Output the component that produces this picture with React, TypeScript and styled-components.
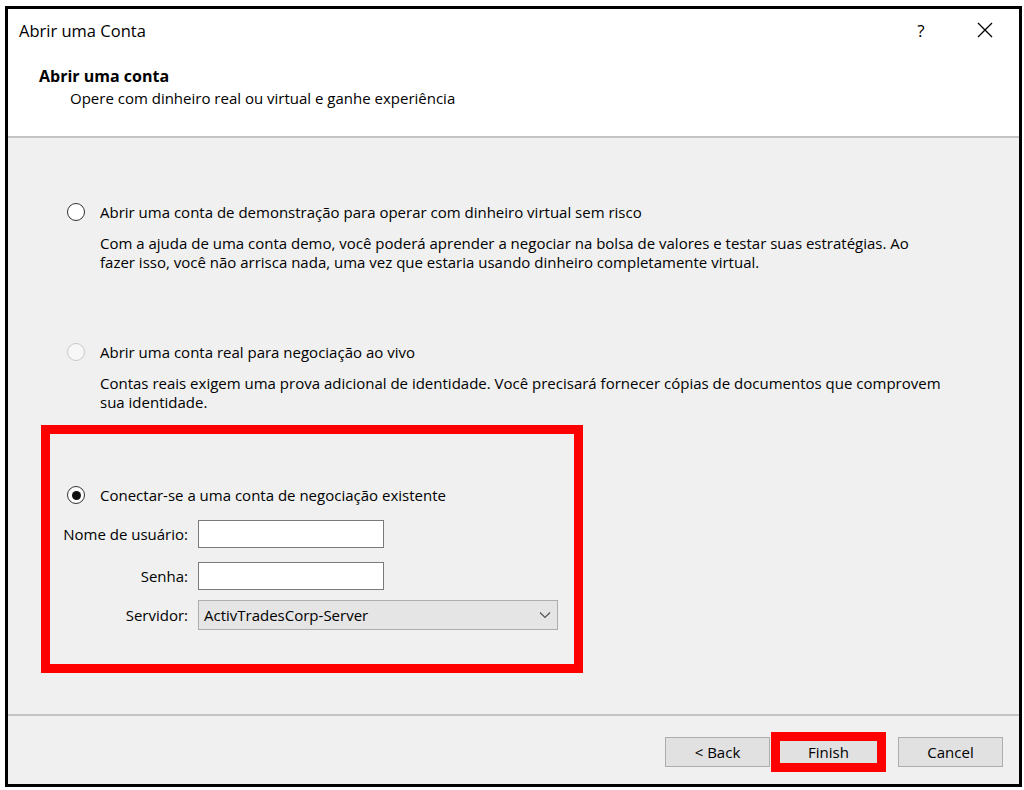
import styled, { createGlobalStyle } from "styled-components";

const GlobalStyle = createGlobalStyle`
  html, body {
    margin: 0;
    padding: 0;
    background: #ffffff;
  }
  body {
    font-family: "Open Sans", "Noto Sans", sans-serif;
    color: #000;
  }
  * {
    box-sizing: border-box;
  }
`;

const Page = styled.div`
  width: 1024px;
  height: 790px;
  padding: 6px 0 0 5px;
`;

const Dialog = styled.div`
  width: 1017px;
  height: 781px;
  border: 3px solid #000;
  display: flex;
  flex-direction: column;
  background: #f0f0f0;
`;

const Header = styled.div`
  background: #fff;
  height: 129px;
  border-bottom: 2px solid #c4c4c4;
  display: flex;
  flex-direction: column;
`;

const TitleBar = styled.div`
  height: 42px;
  display: flex;
  align-items: center;
  padding-left: 11px;
  font-size: 16.5px;
`;

const TitleText = styled.span`
  flex: 1;
`;

const TitleButton = styled.span`
  width: 64px;
  display: flex;
  justify-content: center;
  align-items: center;
  font-size: 17px;
  &:last-child {
    margin-right: 2px;
  }
`;

const Banner = styled.div`
  padding: 14px 0 0 31px;
`;

const BannerTitle = styled.div`
  font-weight: 700;
  font-size: 16px;
  line-height: 22px;
`;

const BannerSub = styled.div`
  font-size: 15px;
  line-height: 22px;
  padding-left: 31px;
`;

const Body = styled.div`
  flex: 1;
  padding: 64px 0 0 59px;
  font-size: 15px;
`;

const Option = styled.div<{ $gap: number }>`
  margin-bottom: ${(p) => p.$gap}px;
`;

const OptionRow = styled.label`
  display: flex;
  align-items: center;
  height: 20px;
  gap: 15px;
`;

const Radio = styled.span<{ $checked?: boolean; $disabled?: boolean }>`
  width: 18px;
  height: 18px;
  border-radius: 50%;
  border: 1.5px solid ${(p) => (p.$disabled ? "#c9c9c9" : "#333")};
  background: ${(p) => (p.$disabled ? "#f7f7f7" : "#fff")};
  display: flex;
  align-items: center;
  justify-content: center;
  flex-shrink: 0;
  &::after {
    content: "";
    display: ${(p) => (p.$checked ? "block" : "none")};
    width: 9px;
    height: 9px;
    border-radius: 50%;
    background: #111;
  }
`;

const Description = styled.p`
  margin: 12px 0 0 33px;
  width: 880px;
  line-height: 19px;
`;

const Highlight = styled.div`
  margin-left: -26px;
  width: 542px;
  border: 9px solid #ff0000;
  padding: 51px 0 34px 0;
`;

const HighlightRadio = styled.div`
  padding-left: 17px;
  margin-bottom: 15px;
`;

const FieldRow = styled.div<{ $mb?: number }>`
  display: flex;
  align-items: center;
  gap: 10px;
  margin-bottom: ${(p) => p.$mb ?? 0}px;
`;

const FieldLabel = styled.span`
  width: 138px;
  text-align: right;
`;

const TextBox = styled.div`
  width: 186px;
  height: 28px;
  background: #fff;
  border: 1px solid #7a7a7a;
`;

const Select = styled.div`
  width: 360px;
  height: 30px;
  background: #e5e5e5;
  border: 1px solid #adadad;
  display: flex;
  align-items: center;
  justify-content: space-between;
  padding: 0 6px 0 5px;
`;

const Footer = styled.div`
  height: 70px;
  border-top: 2px solid #c4c4c4;
  display: flex;
  justify-content: flex-end;
  align-items: flex-start;
  padding: 21px 16px 0 0;
`;

const Button = styled.button<{ $default?: boolean; $mr?: number }>`
  width: 105px;
  height: 30px;
  background: #e1e1e1;
  border: 1px solid ${(p) => (p.$default ? "#0078d7" : "#adadad")};
  font-family: inherit;
  font-size: 15px;
  color: #000;
  padding: 0;
  margin-right: ${(p) => p.$mr ?? 0}px;
`;

const MarkedButton = styled(Button)`
  outline: 9px solid #ff0000;
  outline-offset: -4px;
`;

export default function App() {
  return (
    <Page>
      <GlobalStyle />
      <Dialog>
        <Header>
          <TitleBar>
            <TitleText>Abrir uma Conta</TitleText>
            <TitleButton>?</TitleButton>
            <TitleButton>
              <svg width="16" height="16" viewBox="0 0 16 16">
                <path d="M1 1 L15 15 M15 1 L1 15" stroke="#000" strokeWidth="1.3" />
              </svg>
            </TitleButton>
          </TitleBar>
          <Banner>
            <BannerTitle>Abrir uma conta</BannerTitle>
            <BannerSub>Opere com dinheiro real ou virtual e ganhe experiência</BannerSub>
          </Banner>
        </Header>
        <Body>
          <Option $gap={70}>
            <OptionRow>
              <Radio />
              Abrir uma conta de demonstração para operar com dinheiro virtual sem risco
            </OptionRow>
            <Description>
              Com a ajuda de uma conta demo, você poderá aprender a negociar na bolsa de valores e
              testar suas estratégias. Ao
              <br />
              fazer isso, você não arrisca nada, uma vez que estaria usando dinheiro completamente
              virtual.
            </Description>
          </Option>
          <Option $gap={13}>
            <OptionRow>
              <Radio $disabled />
              Abrir uma conta real para negociação ao vivo
            </OptionRow>
            <Description>
              Contas reais exigem uma prova adicional de identidade. Você precisará fornecer cópias
              de documentos que comprovem
              <br />
              sua identidade.
            </Description>
          </Option>
          <Highlight>
            <HighlightRadio>
              <OptionRow>
                <Radio $checked />
                Conectar-se a uma conta de negociação existente
              </OptionRow>
            </HighlightRadio>
            <FieldRow $mb={14}>
              <FieldLabel>Nome de usuário:</FieldLabel>
              <TextBox />
            </FieldRow>
            <FieldRow $mb={10}>
              <FieldLabel>Senha:</FieldLabel>
              <TextBox />
            </FieldRow>
            <FieldRow>
              <FieldLabel>Servidor:</FieldLabel>
              <Select>
                <span>ActivTradesCorp-Server</span>
                <svg width="12" height="8" viewBox="0 0 12 8">
                  <path d="M1 1.5 L6 6.5 L11 1.5" fill="none" stroke="#555" strokeWidth="1.2" />
                </svg>
              </Select>
            </FieldRow>
          </Highlight>
        </Body>
        <Footer>
          <Button $mr={6}>&lt; Back</Button>
          <MarkedButton $default $mr={17}>
            Finish
          </MarkedButton>
          <Button>Cancel</Button>
        </Footer>
      </Dialog>
    </Page>
  );
}
